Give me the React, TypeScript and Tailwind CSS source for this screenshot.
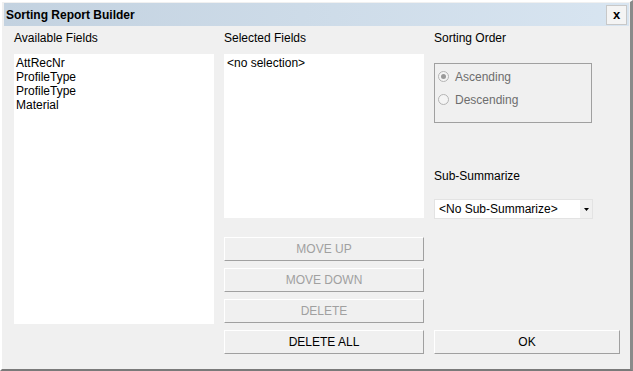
import React from 'react';

const fields = ['AttRecNr', 'ProfileType', 'ProfileType', 'Material'];

const buttonBase =
  'h-[24px] w-full flex items-center justify-center bg-[#f0f0f0] border border-t-white border-l-white border-r-[#a0a0a0] border-b-[#a0a0a0] text-[12px]';

const Radio = ({ label, checked }: { label: string; checked?: boolean }) => (
  <div className="flex items-center h-[23px]">
    <span className="ml-[3px] w-[11px] h-[11px] rounded-full border border-[#b4b4b4] bg-[#f4f4f4] flex items-center justify-center">
      {checked && <span className="w-[5px] h-[5px] rounded-full bg-[#9a9a9a]" />}
    </span>
    <span className="ml-[6px] text-[#6d6d6d]">{label}</span>
  </div>
);

export default function App() {
  return (
    <div
      className="w-[633px] h-[371px] bg-[#f0f0f0] border-t-2 border-l-2 border-t-white border-l-white border-r-[3px] border-b-2 border-r-[#8a8a8a] border-b-[#7a7a7a] text-black text-[12px] leading-[14px] overflow-hidden"
      style={{ fontFamily: '"Liberation Sans", Arial, sans-serif' }}
    >
      {/* Title bar */}
      <div className="mt-[1px] ml-[2px] mr-[1px] h-[23px] flex items-center justify-between bg-gradient-to-r from-[#c3d2e0] to-[#d8e5f1]">
        <span className="ml-[2px] font-bold text-[12px]">Sorting Report Builder</span>
        <button className="mr-[2px] w-[21px] h-[20px] flex items-center justify-center bg-[#f4f4f4] border border-[#c8c8c8] text-[13px] leading-none font-bold pb-[1px]">
          x
        </button>
      </div>

      {/* Body */}
      <div className="flex gap-[10px] pl-[12px] pt-[5px]">
        {/* Available */}
        <div className="w-[200px] flex flex-col">
          <div className="h-[23px]">Available Fields</div>
          <div className="h-[270px] bg-white pt-[2px] pl-[2px]">
            {fields.map((f, i) => (
              <div key={i}>{f}</div>
            ))}
          </div>
        </div>

        {/* Selected */}
        <div className="w-[200px] flex flex-col">
          <div className="h-[23px]">Selected Fields</div>
          <div className="h-[164px] bg-white pt-[2px] pl-[3px]">&lt;no selection&gt;</div>
          <div className="mt-[19px] flex flex-col gap-[7px]">
            <button className={`${buttonBase} text-[#a0a0a0]`}>MOVE UP</button>
            <button className={`${buttonBase} text-[#a0a0a0]`}>MOVE DOWN</button>
            <button className={`${buttonBase} text-[#a0a0a0]`}>DELETE</button>
            <button className={buttonBase}>DELETE ALL</button>
          </div>
        </div>

        {/* Sorting order */}
        <div className="w-[186px] flex flex-col">
          <div className="h-[32px]">Sorting Order</div>
          <div className="w-[158px] h-[60px] border border-[#a0a0a0] pt-[1px]">
            <Radio label="Ascending" checked />
            <Radio label="Descending" />
          </div>
          <div className="mt-[46px] h-[30px]">Sub-Summarize</div>
          <div className="w-[159px] h-[20px] bg-white border border-[#e3e3e3] flex items-center justify-between">
            <span className="ml-[4px]">&lt;No Sub-Summarize&gt;</span>
            <span className="w-[12px] h-full bg-[#f0f0f0] flex items-center justify-center">
              <svg width="5" height="3" viewBox="0 0 5 3">
                <path d="M0 0 H5 L2.5 3 Z" fill="#000" />
              </svg>
            </span>
          </div>
          <button className={`${buttonBase} mt-[111px]`}>OK</button>
        </div>
      </div>
    </div>
  );
}
